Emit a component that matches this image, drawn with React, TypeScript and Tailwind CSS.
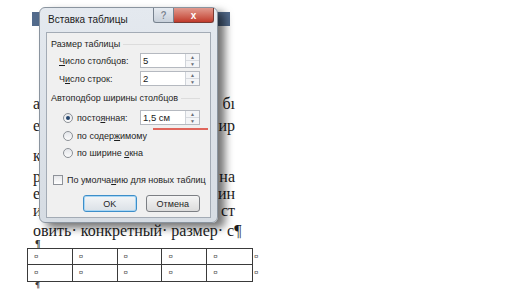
import React from 'react';

const serif = { fontFamily: '"Liberation Serif", "DejaVu Serif", serif' };
const ui = { fontFamily: '"Liberation Sans", Arial, sans-serif' };

const Spin: React.FC = () => (
  <div className="flex flex-col w-[14px] h-full border-l border-[#d0d4da] bg-[#f4f5f7]">
    <div className="flex-1 flex items-center justify-center text-[5px] leading-none text-[#6a6f78] border-b border-[#d8dbe0]">▲</div>
    <div className="flex-1 flex items-center justify-center text-[5px] leading-none text-[#6a6f78]">▼</div>
  </div>
);

const Field: React.FC<{ value: string }> = ({ value }) => (
  <div className="flex shrink-0 h-[15px] w-[60px] border border-[#b5b9c0] bg-white">
    <div className="flex-1 flex items-center pl-[2px] text-[9.5px] text-[#1a1a1a]">{value}</div>
    <Spin />
  </div>
);

const Radio: React.FC<{ on?: boolean }> = ({ on }) => (
  <div className="shrink-0 w-[10px] h-[10px] rounded-full border border-[#8c9096] bg-gradient-to-b from-[#e4e6ea] to-[#fbfbfb] flex items-center justify-center">
    {on && <div className="w-[4px] h-[4px] rounded-full bg-[#25466e]" />}
  </div>
);

const docLines: { left: string; right: string; mt: string }[] = [
  { left: 'а', right: 'бı', mt: 'mt-[70px]' },
  { left: 'е', right: 'ир', mt: 'mt-[6px]' },
  { left: 'к', right: '', mt: 'mt-[14px]' },
  { left: 'р', right: 'на', mt: 'mt-[5px]' },
  { left: 'е', right: 'ин', mt: 'mt-[1px]' },
  { left: 'и', right: 'ст', mt: 'mt-[1px]' },
];

export default function App() {
  return (
    <div className="relative w-[516px] h-[289px] bg-white overflow-hidden">
      {/* document behind the dialog */}
      <div className="flex flex-col pt-[12px]">
        <div className="ml-[32px] w-[198px] h-[14px] bg-[#536b8c]" />
        {docLines.map((l, i) => (
          <div key={i} className={`${l.mt} ml-[33px] w-[202px] h-[16px] flex justify-between text-[16px] leading-[16px] text-[#1c1c1c]`} style={serif}>
            <span>{l.left}</span>
            <span>{l.right}</span>
          </div>
        ))}
        <div className="mt-[4px] ml-[33px] h-[16px] text-[16px] leading-[16px] text-[#1c1c1c] whitespace-nowrap" style={serif}>
          овить· конкретный· размер· с¶
        </div>
        <div className="ml-[35px] h-[9px] text-[10px] leading-[9px] font-bold text-[#333]" style={serif}>¶</div>
        <div className="ml-[27px] flex items-start">
          <div className="grid grid-cols-5 w-[226px] border border-[#3a3a3a]">
            {Array.from({ length: 10 }).map((_, i) => (
              <div
                key={i}
                className={`h-[16px] flex items-center pl-[6px] text-[8px] text-[#555] ${i % 5 !== 4 ? 'border-r border-[#3a3a3a]' : ''} ${i < 5 ? 'border-b border-[#3a3a3a]' : ''}`}
                style={ui}
              >
                ¤
              </div>
            ))}
          </div>
          <div className="flex flex-col text-[8px] text-[#555] pl-[1px]" style={ui}>
            <div className="h-[17px] flex items-center">¤</div>
            <div className="h-[16px] flex items-center">¤</div>
          </div>
        </div>
        <div className="ml-[35px] h-[7px] text-[9px] leading-[7px] font-bold text-[#333]" style={serif}>¶</div>
      </div>

      {/* Insert table dialog */}
      <div
        className="absolute left-[39px] top-[7px] w-[179px] h-[216px] rounded-[6px] border border-[#8a949f] bg-gradient-to-b from-[#e4e9ef] to-[#d6dce3] shadow-[7px_5px_9px_rgba(0,0,0,0.55)] flex flex-col px-[6px] pb-[4px]"
        style={ui}
      >
        <div className="h-[24px] flex items-start">
          <div className="pt-[6px] pl-[2px] text-[10px] leading-[12px] text-[#1b1b1b]">Вставка таблицы</div>
          <div className="ml-auto -mr-[3px] flex">
            <div className="w-[21px] h-[15px] rounded-bl-[3px] border border-t-0 border-[#77828f] bg-gradient-to-b from-[#e6ebf1] to-[#c8d0da] flex items-center justify-center text-[10px] font-bold text-[#7d8793] [text-shadow:0_0_1px_#ffffff]">?</div>
            <div className="w-[40px] h-[15px] rounded-br-[3px] border border-t-0 border-l-0 border-[#7a3a32] bg-gradient-to-b from-[#e19a8f] to-[#c0392b] flex items-center justify-center text-[10px] font-bold text-white">x</div>
          </div>
        </div>
        <div className="flex-1 border border-[#a3abb5] bg-[#f0f0f0] text-[9px] leading-[12px] text-[#1e1e1e] flex flex-col pl-[4px] pr-[10px]">
          <div className="mt-[5px] h-[12px] flex items-center gap-[3px]">
            <span>Размер таблицы</span>
            <div className="flex-1 h-px bg-[#dcdcdc]" />
          </div>
          <div className="mt-[3px] flex items-center pl-[8px]">
            <span className="flex-1"><u>Ч</u>исло столбцов:</span>
            <Field value="5" />
          </div>
          <div className="mt-[3px] flex items-center pl-[8px]">
            <span className="flex-1">Ч<u>и</u>сло строк:</span>
            <Field value="2" />
          </div>
          <div className="mt-[6px] h-[12px] flex items-center gap-[3px]">
            <span>Автоподбор ширины столбцов</span>
            <div className="flex-1 h-px bg-[#dcdcdc]" />
          </div>
          <div className="mt-[6px] flex items-center pl-[12px]">
            <Radio on />
            <span className="flex-1 pl-[4px]">посто<u>я</u>нная:</span>
            <Field value="1,5 см" />
          </div>
          <div className="ml-[102px] mt-[3px] w-[55px] h-[2px] bg-[#e0665c]" />
          <div className="flex items-center pl-[12px]">
            <Radio />
            <span className="pl-[4px]">по содер<u>ж</u>имому</span>
          </div>
          <div className="mt-[5px] flex items-center pl-[12px]">
            <Radio />
            <span className="pl-[4px]">по ширине <u>о</u>кна</span>
          </div>
          <div className="mt-[15px] flex items-center pl-[2px] whitespace-nowrap">
            <div className="shrink-0 w-[10px] h-[10px] border border-[#8e9299] bg-gradient-to-b from-[#e6e7ea] to-white" />
            <span className="pl-[4px]">По умолча<u>н</u>ию для новых таблиц</span>
          </div>
          <div className="mt-[9px] flex gap-[9px] pl-[32px]">
            <div className="w-[57px] h-[17px] rounded-[3px] border border-[#3d8ec9] bg-gradient-to-b from-[#f3f5f7] to-[#dbe1e7] flex items-center justify-center shadow-[inset_0_0_0_1px_#a8d6f4]">OK</div>
            <div className="w-[58px] h-[17px] rounded-[3px] border border-[#7c7f84] bg-gradient-to-b from-[#f5f5f5] to-[#dcdcdc] flex items-center justify-center">Отмена</div>
          </div>
        </div>
      </div>
    </div>
  );
}
